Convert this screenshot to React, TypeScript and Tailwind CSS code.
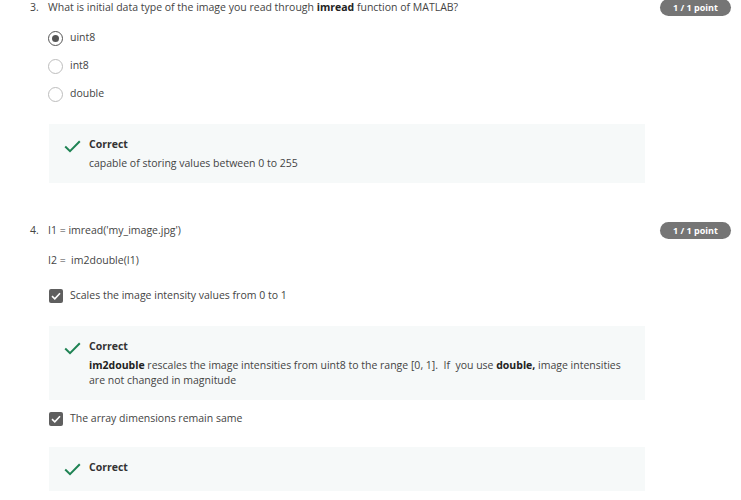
import { ReactNode } from "react";

function Badge() {
	return (
		<div className="w-[71px] h-[17px] rounded-full bg-[#757575] text-white text-[9px] font-bold flex items-center justify-center shrink-0">
			1 / 1 point
		</div>
	);
}

function Radio({ label, checked }: { label: string; checked?: boolean }) {
	return (
		<div className="h-[28px] flex items-center">
			<span
				className={`w-[15px] h-[15px] rounded-full border flex items-center justify-center ${
					checked ? "border-[#555] border-[1.5px]" : "border-[#bdbdbd]"
				}`}
			>
				{checked && <span className="w-[7px] h-[7px] rounded-full bg-[#555]" />}
			</span>
			<span className="ml-[7px]">{label}</span>
		</div>
	);
}

function Checkbox({ label }: { label: string }) {
	return (
		<div className="h-[24px] flex items-center">
			<span className="w-[14px] h-[14px] rounded-[2px] bg-[#5f5f5f] flex items-center justify-center">
				<svg width="10" height="8" viewBox="0 0 10 8" fill="none">
					<path d="M1 4.2 L3.8 6.8 L9 1.2" stroke="white" strokeWidth="1.6" />
				</svg>
			</span>
			<span className="ml-[7px]">{label}</span>
		</div>
	);
}

function Feedback({ children }: { children?: ReactNode }) {
	return (
		<div className="bg-[#f6f9f9] pl-[15px] pr-4 pt-[13px] pb-[12px] flex">
			<svg width="17" height="13" viewBox="0 0 17 13" fill="none" className="mt-[3px] shrink-0">
				<path d="M1.2 6.5 L6 11.2 L15.8 1.2" stroke="#1f8354" strokeWidth="2" />
			</svg>
			<div className="ml-[8px] leading-[15px]">
				<div className="font-bold text-[#333] h-[19px]">Correct</div>
				{children}
			</div>
		</div>
	);
}

export default function App() {
	return (
		<div className="bg-white h-[500px] overflow-hidden pl-[30px] pr-[10px] text-[10.5px] text-[#444] font-['Open_Sans',sans-serif]">
			<div className="flex">
				<div className="w-[18px] leading-[14px]">3.</div>
				<div className="flex-1">
					<div className="leading-[14px]">
						What is initial data type of the image you read through <b className="text-[#222]">imread</b> function of MATLAB?
					</div>
					<div className="mt-[10px]">
						<Radio label="uint8" checked />
						<Radio label="int8" />
						<Radio label="double" />
					</div>
					<div className="mt-[16px] ml-[1px]">
						<Feedback>
							<div>capable of storing values between 0 to 255</div>
						</Feedback>
					</div>
				</div>
				<div className="ml-[15px] -mt-[1px]">
					<Badge />
				</div>
			</div>

			<div className="flex mt-[40px]">
				<div className="w-[18px] leading-[14px]">4.</div>
				<div className="flex-1">
					<div className="leading-[14px]">I1 = imread('my_image.jpg')</div>
					<div className="leading-[14px] mt-[16px]">I2 =&nbsp; im2double(I1)</div>
					<div className="mt-[17px] ml-[1px]">
						<Checkbox label="Scales the image intensity values from 0 to 1" />
					</div>
					<div className="mt-[18px] ml-[1px]">
						<Feedback>
							<div>
								<b className="text-[#222]">im2double</b> rescales the image intensities from uint8 to the range [0, 1].&nbsp; If&nbsp; you use{" "}
								<b className="text-[#222]">double,</b> image intensities are not changed in magnitude
							</div>
						</Feedback>
					</div>
					<div className="mt-[7px] ml-[1px]">
						<Checkbox label="The array dimensions remain same" />
					</div>
					<div className="mt-[16px] ml-[1px]">
						<Feedback />
					</div>
				</div>
				<div className="ml-[15px] -mt-[1px]">
					<Badge />
				</div>
			</div>
		</div>
	);
}
